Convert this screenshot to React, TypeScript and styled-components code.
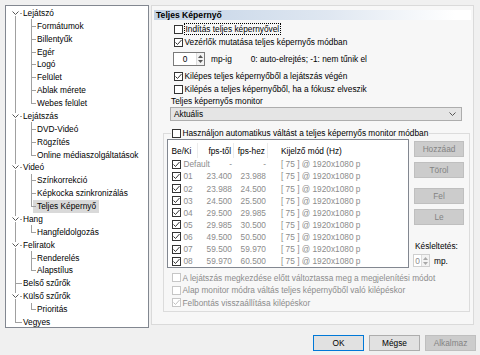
import styled, { createGlobalStyle } from 'styled-components';

const GlobalStyle = createGlobalStyle`
  html, body { margin: 0; padding: 0; background: #f0f0f0; }
  body {
    font-family: "Liberation Sans", Arial, sans-serif;
    font-size: 8.3px;
    color: #000;
  }
  * { box-sizing: border-box; }
`;

const LINE = '#a0a0a0';

const Dialog = styled.div`
  width: 480px;
  height: 355px;
  padding: 5px 6px 0 5px;
  display: flex;
  flex-direction: column;
  background: #f0f0f0;
`;

const Main = styled.div`
  display: flex;
  gap: 2px;
  height: 323px;
`;

/* ---------- tree ---------- */

const Tree = styled.div`
  width: 144px;
  height: 323px;
  border: 1px solid #828790;
  background: #fff;
  padding-top: 0.5px;
`;

const TreeRow = styled.div`
  display: flex;
  align-items: center;
  height: 12.875px;
`;

const Guide = styled.span<{ $w: number; $x: number; $up: boolean; $down: boolean; $from: number | null }>`
  position: relative;
  flex: none;
  align-self: stretch;
  width: ${(p) => p.$w}px;

  &::before {
    content: '';
    position: absolute;
    left: ${(p) => p.$x}px;
    top: ${(p) => (p.$up ? '0' : '50%')};
    bottom: ${(p) => (p.$down ? '0' : '50%')};
    border-left: 1px solid ${LINE};
  }

  &::after {
    content: '';
    display: ${(p) => (p.$from === null ? 'none' : 'block')};
    position: absolute;
    left: ${(p) => p.$from ?? 0}px;
    right: 1px;
    top: 50%;
    border-top: 1px solid ${LINE};
  }
`;

const Chevron = styled.svg`
  position: absolute;
  z-index: 1;
  left: 5px;
  top: 50%;
  margin-top: -3px;
  background: #fff;
`;

const TreeLabel = styled.span<{ $selected?: boolean }>`
  white-space: nowrap;
  color: #000;
  padding: 1.5px 3px 1.5px 4px;
  margin-left: ${(p) => (p.$selected ? '-4px' : '0')};
  padding-left: ${(p) => (p.$selected ? '4px' : '0')};
  background: ${(p) => (p.$selected ? '#d9d9d9' : 'transparent')};
`;

type Node = { label: string; level: 0 | 1; expanded?: boolean; selected?: boolean };

const nodes: Node[] = [
  { label: 'Lejátszó', level: 0, expanded: true },
  { label: 'Formátumok', level: 1 },
  { label: 'Billentyűk', level: 1 },
  { label: 'Egér', level: 1 },
  { label: 'Logó', level: 1 },
  { label: 'Felület', level: 1 },
  { label: 'Ablak mérete', level: 1 },
  { label: 'Webes felület', level: 1 },
  { label: 'Lejátszás', level: 0, expanded: true },
  { label: 'DVD-Videó', level: 1 },
  { label: 'Rögzítés', level: 1 },
  { label: 'Online médiaszolgáltatások', level: 1 },
  { label: 'Videó', level: 0, expanded: true },
  { label: 'Színkorrekció', level: 1 },
  { label: 'Képkocka szinkronizálás', level: 1 },
  { label: 'Teljes Képernyő', level: 1, selected: true },
  { label: 'Hang', level: 0, expanded: true },
  { label: 'Hangfeldolgozás', level: 1 },
  { label: 'Feliratok', level: 0, expanded: true },
  { label: 'Renderelés', level: 1 },
  { label: 'Alapstílus', level: 1 },
  { label: 'Belső szűrők', level: 0 },
  { label: 'Külső szűrők', level: 0, expanded: true },
  { label: 'Prioritás', level: 1 },
  { label: 'Vegyes', level: 0 },
];

function NavTree() {
  const lastRoot = nodes.length - 1;
  return (
    <Tree>
      {nodes.map((n, i) => {
        const next = nodes[i + 1];
        return (
          <TreeRow key={n.label}>
            <Guide
              $w={17}
              $x={9}
              $up={i > 0}
              $down={i < lastRoot}
              $from={n.level === 0 ? (n.expanded ? 13 : 9) : null}
            >
              {n.expanded && (
                <Chevron width="9" height="6" viewBox="0 0 9 6">
                  <polyline points="1.5,1.5 4.5,4.5 7.5,1.5" fill="none" stroke="#555" strokeWidth="1" />
                </Chevron>
              )}
            </Guide>
            {n.level === 1 && (
              <Guide $w={14} $x={8} $up={true} $down={!!next && next.level === 1} $from={8} />
            )}
            <TreeLabel $selected={n.selected}>{n.label}</TreeLabel>
          </TreeRow>
        );
      })}
    </Tree>
  );
}

/* ---------- controls ---------- */

const Box = styled.span<{ $disabled?: boolean }>`
  flex: none;
  width: 9px;
  height: 9px;
  border: 1px solid ${(p) => (p.$disabled ? '#c6c6c6' : '#333')};
  background: #fff;
  display: flex;
  align-items: center;
  justify-content: center;
`;

function CheckBox({ checked, disabled }: { checked?: boolean; disabled?: boolean }) {
  return (
    <Box $disabled={disabled}>
      {checked && (
        <svg width="7" height="7" viewBox="0 0 7 7">
          <polyline
            points="0.5,3.5 2.5,5.5 6.5,1"
            fill="none"
            stroke={disabled ? '#c0c0c0' : '#333'}
            strokeWidth="1"
          />
        </svg>
      )}
    </Box>
  );
}

const CheckRow = styled.div<{ $indent?: number; $top?: number; $h?: number; $disabled?: boolean }>`
  display: flex;
  align-items: center;
  gap: 1.5px;
  height: ${(p) => p.$h ?? 13}px;
  margin-top: ${(p) => p.$top ?? 0}px;
  padding-left: ${(p) => p.$indent ?? 20}px;
  color: ${(p) => (p.$disabled ? '#8c8c8c' : '#000')};
  white-space: nowrap;
`;

const FocusText = styled.span`
  outline: 1px dotted #000;
  outline-offset: 0;
  padding: 0 1px;
  line-height: 10px;
`;

const SpinBox = styled.div<{ $w: number; $disabled?: boolean }>`
  flex: none;
  width: ${(p) => p.$w}px;
  height: 100%;
  border: 1px solid ${(p) => (p.$disabled ? '#cfcfcf' : '#7a7a7a')};
  background: #fff;
  display: flex;
  align-items: center;
  color: ${(p) => (p.$disabled ? '#8c8c8c' : '#000')};
`;

const SpinValue = styled.span`
  flex: 1;
  text-align: center;
`;

const SpinArrows = styled.span`
  flex: none;
  width: 8px;
  height: 100%;
  border-left: 1px solid #dcdcdc;
  background: #f3f3f3;
  display: flex;
  flex-direction: column;
  align-items: center;
  justify-content: center;
  gap: 2px;
`;

function Spin({ w, disabled }: { w: number; disabled?: boolean }) {
  const c = disabled ? '#a8a8a8' : '#555';
  return (
    <SpinBox $w={w} $disabled={disabled}>
      <SpinValue>0</SpinValue>
      <SpinArrows>
        <svg width="5" height="3" viewBox="0 0 5 3">
          <polygon points="0,3 2.5,0 5,3" fill={c} />
        </svg>
        <svg width="5" height="3" viewBox="0 0 5 3">
          <polygon points="0,0 2.5,3 5,0" fill={c} />
        </svg>
      </SpinArrows>
    </SpinBox>
  );
}

const SpinRow = styled.div`
  display: flex;
  align-items: center;
  height: 14px;
  margin-top: 3.5px;
  padding-left: 19px;
  white-space: nowrap;
`;

const Unit = styled.span<{ $gap: number }>`
  margin-left: ${(p) => p.$gap}px;
`;

/* ---------- page ---------- */

const Panel = styled.section`
  flex: 1;
  height: 320px;
  border: 1px solid #dadada;
  background: #f7f7f7;
  padding: 4px 2px 0 2px;
  display: flex;
  flex-direction: column;
`;

const Header = styled.div`
  height: 10px;
  line-height: 10px;
  padding-left: 2px;
  font-weight: bold;
  font-size: 8.6px;
  background: linear-gradient(to right, #c3d3e6 0%, #dfe7f1 55%, #ffffff 95%);
  margin-bottom: 2.5px;
`;

const FieldLabel = styled.div`
  height: 11px;
  line-height: 11px;
  margin-top: 0.5px;
  padding-left: 17px;
`;

const Combo = styled.div`
  height: 14px;
  margin-left: 16px;
  width: 292px;
  border: 1px solid #adadad;
  background: #e5e5e5;
  display: flex;
  align-items: center;
  justify-content: space-between;
  padding: 0 5px 0 3px;
`;

const Group = styled.fieldset`
  margin: 6px 1px 0 9px;
  padding: 0 3px 2px 3px;
  border: 1px solid #dcdcdc;
  min-width: 0;
`;

const Legend = styled.legend`
  margin-left: 4px;
  padding: 0 1px;
  height: 12px;
  display: flex;
  align-items: center;
  gap: 1.5px;
  white-space: nowrap;
`;

const GroupBody = styled.div`
  display: flex;
  align-items: flex-start;
`;

const Table = styled.div`
  width: 242px;
  height: 129px;
  margin-top: 0.3px;
  border: 1px solid #828790;
  background: #fff;
`;

const HeadRow = styled.div`
  display: flex;
  height: 18px;
  padding-top: 3px;
`;

const Row = styled.div`
  display: flex;
  align-items: center;
  height: 12.1px;
  color: #8c8c8c;
`;

const Cell = styled.div<{ $w: number; $right?: boolean; $sep?: boolean; $pad?: number }>`
  flex: none;
  width: ${(p) => p.$w}px;
  display: flex;
  align-items: center;
  justify-content: ${(p) => (p.$right ? 'flex-end' : 'flex-start')};
  padding: ${(p) => (p.$right ? '0 2px 0 0' : `0 0 0 ${p.$pad ?? 3.5}px`)};
  gap: 3px;
  border-right: ${(p) => (p.$sep ? '1px solid #ececec' : 'none')};
  white-space: nowrap;
  height: 100%;
`;

const Side = styled.div`
  margin-left: 5px;
  width: 50px;
  display: flex;
  flex-direction: column;
`;

const Button = styled.div<{ $top?: number; $w?: number; $variant?: 'default' | 'normal' | 'disabled' }>`
  flex: none;
  width: ${(p) => p.$w ?? 50}px;
  height: 16px;
  margin-top: ${(p) => p.$top ?? 0}px;
  display: flex;
  align-items: center;
  justify-content: center;
  background: ${(p) => (p.$variant === 'disabled' || !p.$variant ? '#cccccc' : '#e1e1e1')};
  color: ${(p) => (p.$variant === 'disabled' || !p.$variant ? '#838383' : '#000')};
  border: 1px solid
    ${(p) => (p.$variant === 'default' ? '#0078d7' : p.$variant === 'normal' ? '#adadad' : '#bfbfbf')};
`;

const DelayLabel = styled.div`
  margin-top: 15px;
  height: 12px;
  line-height: 12px;
  padding-left: 1px;
`;

const DelayRow = styled.div`
  display: flex;
  align-items: center;
  height: 13px;
  margin-top: 2px;
  margin-left: -1px;
`;

const Footer = styled.div`
  display: flex;
  justify-content: flex-end;
  gap: 5px;
  margin-top: 7px;
  margin-right: -2px;
`;

const rows = [
  ['Default', '-', '-'],
  ['01', '23.400', '23.988'],
  ['02', '23.988', '24.500'],
  ['03', '24.500', '25.500'],
  ['04', '29.500', '29.985'],
  ['05', '29.985', '30.500'],
  ['06', '49.500', '50.500'],
  ['07', '59.500', '59.970'],
  ['08', '59.970', '60.500'],
];

const COLS = [30, 36, 34, 140];

function FullscreenPage() {
  return (
    <Panel>
      <Header>Teljes Képernyő</Header>
      <CheckRow>
        <CheckBox />
        <FocusText>Indítás teljes képernyővel</FocusText>
      </CheckRow>
      <CheckRow>
        <CheckBox checked />
        <span>Vezérlők mutatása teljes képernyős módban</span>
      </CheckRow>
      <SpinRow>
        <Spin w={32} />
        <Unit $gap={6}>mp-ig</Unit>
        <Unit $gap={19}>0: auto-elrejtés; -1: nem tűnik el</Unit>
      </SpinRow>
      <CheckRow $top={3.5}>
        <CheckBox checked />
        <span>Kilépes teljes képernyőből a lejátszás végén</span>
      </CheckRow>
      <CheckRow>
        <CheckBox />
        <span>Kilépés a teljes képernyőből, ha a fókusz elveszik</span>
      </CheckRow>
      <FieldLabel>Teljes képernyős monitor</FieldLabel>
      <Combo>
        <span>Aktuális</span>
        <svg width="7" height="4" viewBox="0 0 7 4">
          <polyline points="0.5,0.5 3.5,3.5 6.5,0.5" fill="none" stroke="#555" strokeWidth="1" />
        </svg>
      </Combo>
      <Group>
        <Legend>
          <CheckBox />
          <span>Használjon automatikus váltást a teljes képernyős monitor módban</span>
        </Legend>
        <GroupBody>
          <Table>
            <HeadRow>
              <Cell $w={COLS[0]} $sep>Be/Ki</Cell>
              <Cell $w={COLS[1]} $right $sep>fps-től</Cell>
              <Cell $w={COLS[2]} $right $sep>fps-hez</Cell>
              <Cell $w={COLS[3]} $pad={13}>Kijelző mód (Hz)</Cell>
            </HeadRow>
            {rows.map(([id, from, to]) => (
              <Row key={id}>
                <Cell $w={COLS[0]}>
                  <CheckBox checked />
                  <span>{id}</span>
                </Cell>
                <Cell $w={COLS[1]} $right>{from}</Cell>
                <Cell $w={COLS[2]} $right>{to}</Cell>
                <Cell $w={COLS[3]} $pad={13}>[ 75 ] @ 1920x1080 p</Cell>
              </Row>
            ))}
          </Table>
          <Side>
            <Button $top={1.5}>Hozzáad</Button>
            <Button $top={5}>Törol</Button>
            <Button $top={10.5}>Fel</Button>
            <Button $top={5}>Le</Button>
            <DelayLabel>Késleltetés:</DelayLabel>
            <DelayRow>
              <Spin w={17} disabled />
              <Unit $gap={4}>mp.</Unit>
            </DelayRow>
          </Side>
        </GroupBody>
        <CheckRow $indent={5} $top={3} $h={12.5} $disabled>
          <CheckBox disabled />
          <span>A lejátszás megkezdése előtt változtassa meg a megjelenítési módot</span>
        </CheckRow>
        <CheckRow $indent={5} $h={12.5} $disabled>
          <CheckBox disabled />
          <span>Alap monitor módra váltás teljes képernyőből való kilépéskor</span>
        </CheckRow>
        <CheckRow $indent={5} $h={12.5} $disabled>
          <CheckBox checked disabled />
          <span>Felbontás visszaállítása kilépéskor</span>
        </CheckRow>
      </Group>
    </Panel>
  );
}

export default function App() {
  return (
    <>
      <GlobalStyle />
      <Dialog>
        <Main>
          <NavTree />
          <FullscreenPage />
        </Main>
        <Footer>
          <Button $w={51} $variant="default">OK</Button>
          <Button $w={51} $variant="normal">Mégse</Button>
          <Button $w={51} $variant="disabled">Alkalmaz</Button>
        </Footer>
      </Dialog>
    </>
  );
}
